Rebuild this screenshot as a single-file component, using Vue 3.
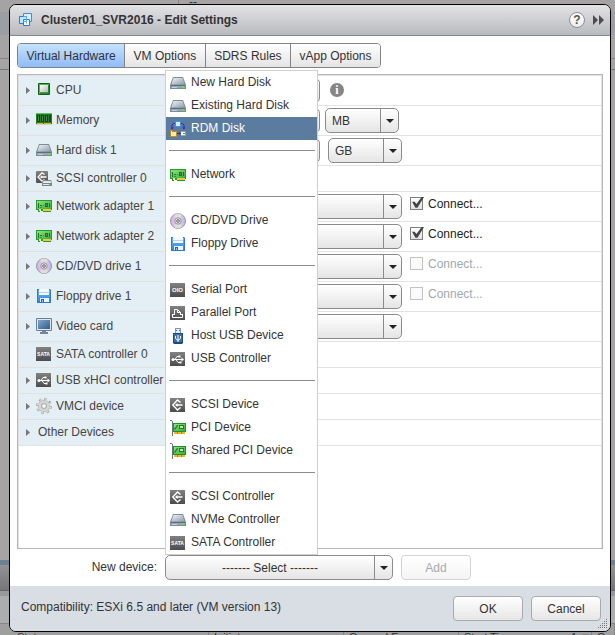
<script setup>
import { ref } from 'vue'

const tabs = ['Virtual Hardware', 'VM Options', 'SDRS Rules', 'vApp Options']
const activeTab = ref('Virtual Hardware')

const devices = [
  { name: 'CPU', icon: 'cpu', control: 'cpu' },
  { name: 'Memory', icon: 'memory', control: 'size', unit: 'MB' },
  { name: 'Hard disk 1', icon: 'disk', control: 'size', unit: 'GB', wide: true },
  { name: 'SCSI controller 0', icon: 'scsidisk', short: true },
  { name: 'Network adapter 1', icon: 'network', control: 'select', connect: true, connected: true },
  { name: 'Network adapter 2', icon: 'network', control: 'select', connect: true, connected: true },
  { name: 'CD/DVD drive 1', icon: 'cd', control: 'select', connect: true, disabled: true },
  { name: 'Floppy drive 1', icon: 'floppy', control: 'select', connect: true, disabled: true },
  { name: 'Video card', icon: 'video', control: 'select' },
  { name: 'SATA controller 0', icon: 'sata', short: true, leaf: true },
  { name: 'USB xHCI controller', icon: 'usb', short: true },
  { name: 'VMCI device', icon: 'gear', short: true },
  { name: 'Other Devices', short: true }
]

const groups = [
  [['New Hard Disk', 'disk'], ['Existing Hard Disk', 'disk'], ['RDM Disk', 'rdm']],
  [['Network', 'network']],
  [['CD/DVD Drive', 'cd'], ['Floppy Drive', 'floppy']],
  [['Serial Port', 'serial'], ['Parallel Port', 'parallel'], ['Host USB Device', 'usbstick'], ['USB Controller', 'usb']],
  [['SCSI Device', 'scsi'], ['PCI Device', 'pci'], ['Shared PCI Device', 'pci']],
  [['SCSI Controller', 'scsi'], ['NVMe Controller', 'disk'], ['SATA Controller', 'sata']]
]
const highlighted = ref('RDM Disk')
</script>

<template>
  <div class="screen">
    <svg class="defs" aria-hidden="true">
      <defs>
        <linearGradient id="g-disk" x1="0" y1="0" x2="1" y2="1">
          <stop offset="0" stop-color="#f0f3f5" /><stop offset="1" stop-color="#8d9bab" />
        </linearGradient>
        <linearGradient id="g-dark" x1="0" y1="0" x2="0" y2="1">
          <stop offset="0" stop-color="#828282" /><stop offset="1" stop-color="#4c4c4c" />
        </linearGradient>
        <linearGradient id="g-green" x1="0" y1="0" x2="1" y2="1">
          <stop offset="0" stop-color="#8ae878" /><stop offset="1" stop-color="#35ad3a" />
        </linearGradient>
        <linearGradient id="g-blue" x1="0" y1="0" x2="0" y2="1">
          <stop offset="0" stop-color="#6bb5fa" /><stop offset="1" stop-color="#2f86e4" />
        </linearGradient>
        <linearGradient id="g-screen" x1="0" y1="0" x2="1" y2="1">
          <stop offset="0" stop-color="#86a7c9" /><stop offset="1" stop-color="#2d5c90" />
        </linearGradient>
        <linearGradient id="g-chip" x1="0" y1="0" x2="1" y2="1">
          <stop offset="0" stop-color="#ffffff" /><stop offset="1" stop-color="#b9b9b9" />
        </linearGradient>
        <linearGradient id="g-cd" x1="0" y1="0" x2="1" y2="0">
          <stop offset="0" stop-color="#b5bdee" /><stop offset=".25" stop-color="#e6bce8" />
          <stop offset=".5" stop-color="#e8e8e8" /><stop offset=".75" stop-color="#dcc0ec" />
          <stop offset="1" stop-color="#a8b8ee" />
        </linearGradient>
      </defs>
      <symbol id="i-cpu" viewBox="0 0 16 16">
        <rect x="2" y="1" width="12" height="12" rx="1" fill="#0f5f15" />
        <path d="M3 2h10v1H3zM3 3h1v9H3z" fill="#4fb94a" />
        <path d="M12 3h1v9H4v-1h8z" fill="#1f8a28" />
        <rect x="4" y="3" width="8" height="8" fill="#5f8a60" />
        <rect x="4" y="3" width="8" height="7" fill="url(#g-chip)" />
      </symbol>
      <symbol id="i-memory" viewBox="0 0 16 16">
        <path d="M0 1h16v11H0z" fill="#1c8226" />
        <path d="M0 1h16v1H0z" fill="#5cc05a" />
        <path d="M1 3h3v7H1zM5 3h3v7H5zM9 3h3v7H9zM13 3h2v7h-2z" fill="#1b431d" />
        <path d="M2 4h1v5H2zM6 4h1v5H6zM10 4h1v5h-1z" fill="#587a59" />
        <path d="M1 11h6v1H1zM8 11h7v1H8z" fill="#f0a732" />
        <path d="M0 12h16v1H0z" fill="#cfd8a6" />
      </symbol>
      <symbol id="i-disk" viewBox="0 0 16 16">
        <path d="M3 2h10l3 8v4H0v-4z" fill="#7d8b9b" />
        <path d="M3.500 3h9l2.200 6.500H1.300z" fill="url(#g-disk)" />
        <path d="M1 10h14v3H1z" fill="#98a5b4" />
        <path d="M1 10h14v1H1z" fill="#5f6f82" />
        <path d="M2 12h5v1H2z" fill="#c6ced6" />
        <path d="M12 11h2v2h-2z" fill="#62e23c" />
      </symbol>
      <symbol id="i-scsi" viewBox="0 0 16 16">
        <rect y="1" width="15" height="14" fill="url(#g-dark)" />
        <path d="M10.500 5.500 7.500 3 2.800 8l4.700 5 3-2.500M6 8h6.500" fill="none" stroke="#fff" stroke-width="1.400" />
        <path d="m5 8 2.500-2v4z" fill="#fff" />
      </symbol>
      <symbol id="i-scsidisk" viewBox="0 0 16 16">
        <rect y="1" width="12" height="12" rx="1" fill="url(#g-dark)" />
        <path d="M8.500 4.500 6 2.800 2 7l4 4.200 2.500-1.700M5 7h5.500" fill="none" stroke="#fff" stroke-width="1.300" />
        <path d="m4 7 2.200-1.800v3.600z" fill="#fff" />
        <path d="M7 10h8l1 3v3H6v-3z" fill="#7a858e" />
        <path d="M7.500 11h7l1 2h-9zM7 14h8v1H7z" fill="#e5e9ec" />
        <path d="M13 14h2v1h-2z" fill="#45d23b" />
      </symbol>
      <symbol id="i-network" viewBox="0 0 16 16">
        <path d="M0 2h16v10h-1v2H7v-1H4v1H2v-2H0z" fill="#279a31" />
        <path d="M1 3h14v8H1z" fill="url(#g-green)" />
        <path d="M2 5h1v5H2zM4 7h2v1H4zM9 5h3v4H9zM13 5h1v4h-1z" fill="#2a6a2e" />
        <path d="M7 7h1v1H7zM4 9h2v1H4z" fill="#3f8b41" />
        <path d="M10 6h1v2h-1z" fill="#777" />
        <path d="M7 11h8v2H7z" fill="#efc63f" />
        <path d="M3 11h2v2H3z" fill="#efe68a" />
      </symbol>
      <symbol id="i-cd" viewBox="0 0 16 16">
        <circle cx="8" cy="8" r="7.500" fill="url(#g-cd)" stroke="#9a9a9a" />
        <path d="M4 2a7 7 0 0 1 8 0L9.500 6h-3zM4 14a7 7 0 0 0 8 0L9.500 10h-3z" fill="#dedede" opacity=".9" />
        <circle cx="8" cy="8" r="3.200" fill="#e6e6e6" stroke="#808080" stroke-width=".8" />
        <circle cx="8" cy="8" r="1.300" fill="#fff" stroke="#5f5f5f" />
      </symbol>
      <symbol id="i-floppy" viewBox="0 0 16 16">
        <path d="M1 1h13l1 1v13H1z" fill="#2a7bd6" />
        <path d="M2 2h12v12H2z" fill="url(#g-blue)" />
        <path d="M3 1h10v6H3z" fill="#f5f8fc" />
        <path d="M3 4h10v1H3z" fill="#c3cfdd" />
        <path d="M4 10h9v4H4z" fill="#edf0f4" />
        <path d="M5 11h3v3H5z" fill="#2a66ac" />
        <path d="M6 12h1v2H6z" fill="#9fc0e6" />
      </symbol>
      <symbol id="i-video" viewBox="0 0 16 16">
        <rect width="16" height="13" rx="1" fill="#6a7f96" />
        <rect x="1" y="1" width="14" height="11" fill="#e0e7ee" />
        <rect x="2" y="2" width="12" height="9" fill="url(#g-screen)" />
        <path d="M6 13h4v1h2v2H4v-2h2z" fill="#6f86a0" />
      </symbol>
      <symbol id="i-sata" viewBox="0 0 16 16">
        <rect y="1" width="15" height="14" fill="url(#g-dark)" />
        <text x="7.500" y="10" text-anchor="middle" font-size="5" font-weight="bold" fill="#fff">SATA</text>
      </symbol>
      <symbol id="i-usb" viewBox="0 0 16 16">
        <rect y="1" width="15" height="14" fill="url(#g-dark)" />
        <path d="M3 8.500h9M5 8.500l2-3h2M6 8.500l2 3h2" fill="none" stroke="#fff" />
        <circle cx="3" cy="8.500" r="1.500" fill="#fff" />
        <path d="m11.500 6.500 2.500 2-2.500 2zM8.500 4.500h2v2h-2zM9.500 10.500h2v2h-2z" fill="#fff" />
      </symbol>
      <symbol id="i-serial" viewBox="0 0 16 16">
        <rect y="1" width="15" height="14" fill="url(#g-dark)" />
        <text x="7.500" y="10" text-anchor="middle" font-size="6" font-weight="bold" fill="#fff">OIO</text>
      </symbol>
      <symbol id="i-parallel" viewBox="0 0 16 16">
        <rect y="1" width="15" height="14" fill="url(#g-dark)" />
        <path d="M4.500 10V4.500h3l3 3V10M7.500 5v2.500h3M2.500 9.500v3h10v-3M2 9.500h3M10 9.500h3" fill="none" stroke="#fff" />
      </symbol>
      <symbol id="i-usbstick" viewBox="0 0 16 16">
        <path d="M5 0h6v5H5z" fill="#7e97b2" />
        <path d="M6 1h4v4H6z" fill="#e4edf5" />
        <path d="M6 2h1v1H6zM9 2h1v1H9z" fill="#506c8c" />
        <path d="M3 5h10v10l-1 1H4l-1-1z" fill="#1c4a7c" />
        <path d="M4 6h8v8H4z" fill="#3d72a9" />
        <path d="M8 7v7M5.500 8v2.500L8 12.500M10.500 8v2.500L8 12.500" fill="none" stroke="#fff" />
      </symbol>
      <symbol id="i-pci" viewBox="0 0 16 16">
        <path d="M0 0h2v1h1v15H2V1H0z" fill="#66748c" />
        <path d="M3 3h13v9H3z" fill="#239030" />
        <path d="M4 4h11v7H4z" fill="url(#g-green)" />
        <path d="M9 5h5v4H9z" fill="#23762d" />
        <path d="M10 6h3v2h-3z" fill="#bfe8b0" />
        <path d="M4 9l3-4h1v1L5 10z" fill="#347c32" />
        <path d="M4 12h11v2H4z" fill="#e8b92e" />
        <path d="M7 12h1v2H7zM11 12h1v2h-1z" fill="#8f8f2c" />
      </symbol>
      <symbol id="i-rdm" viewBox="0 0 16 16">
        <path d="M5 2.500H3.500L2 4v3M11 2.500h1.500L14 4v3M7 12.500h3" fill="none" stroke="#3426c0" />
        <path d="M.5 6.500h3.500L2 8.500zM12 6.500h3.500L14 8.500zM9 11l2 1.500L9 14z" fill="#3426c0" />
        <path d="M6 0h4l1 1v4l-1 1H6L5 5V1z" fill="#3b97ea" />
        <path d="M6 1h4v4H6z" fill="#d4efff" />
        <path d="M0 9h3v1h4v6H0z" fill="#b98d2a" />
        <path d="M1 10h1v1h4v4H1z" fill="#fdebaa" />
        <path d="M11 10h4l1 1v4h-5z" fill="#98a2ae" />
        <path d="M11 11h4v3h-4z" fill="#f6f8fa" />
        <path d="M13 12h2v1h-2z" fill="#27b52d" />
      </symbol>
      <symbol id="i-gear" viewBox="0 0 16 16">
        <circle cx="8" cy="8" r="6.700" fill="none" stroke="#a8a8a8" stroke-width="2.600" stroke-dasharray="2.630 2.630" />
        <circle cx="8" cy="8" r="4.300" fill="none" stroke="#a8a8a8" stroke-width="3.600" />
        <circle cx="8" cy="8" r="6.300" fill="none" stroke="#d8d8d8" stroke-width="2" stroke-dasharray="1.600 3.348" stroke-dashoffset="-.5" />
        <circle cx="8" cy="8" r="4.200" fill="none" stroke="#d6d6d6" stroke-width="2.800" />
        <circle cx="8" cy="8" r="2.400" fill="#f4f8fa" stroke="#999" stroke-width=".8" />
      </symbol>
    </svg>

    <div class="backdrop" aria-hidden="true">
      <div class="bd-top"><span>--</span></div>
      <div class="bd-band"></div>
      <div class="bd-gap"></div>
      <div class="bd-line"></div>
      <div class="bd-fill"></div>
      <div class="bd-bar"></div>
      <div class="bd-tools"></div>
      <div class="bd-head">
        <span>Status</span><span>Initiator</span><span>Queued For</span><span class="sorted">Start Time<i>1 ▼</i></span><span>Co</span>
      </div>
    </div>

    <section class="dialog" role="dialog" aria-labelledby="title">
      <header class="titlebar">
        <svg class="vm" viewBox="0 0 14 14">
          <path d="M4.500 .5h8v8h-8z" fill="#d8efff" stroke="#3390dc" />
          <path d="M.5 3.500h7v7h-7z" fill="#c2e4fc" stroke="#2380d0" />
          <path d="M4.500 6.500h6v6h-6z" fill="#f2faff" stroke="#2380d0" />
          <path d="M4.500 3.500h3v7M4.500 8.500h3" fill="none" stroke="#60aee8" />
        </svg>
        <h1 id="title">Cluster01_SVR2016 - Edit Settings</h1>
        <button class="help">?</button>
        <button class="more" aria-label="More">
          <svg viewBox="0 0 12 10"><path d="M0 0l5 5-5 5zM6 0l5 5-5 5z" fill="#4c4c4c" /></svg>
        </button>
      </header>

      <main class="content">
        <nav class="tabs">
          <button v-for="t in tabs" :key="t" :class="{ active: t === activeTab }" @click="activeTab = t">{{ t }}</button>
        </nav>

        <div class="panel">
          <div v-for="(d, i) in devices" :key="d.name" class="row" :class="{ short: d.short }">
            <button class="name">
              <svg class="tri" viewBox="0 0 4 7"><path v-if="!d.leaf" d="M0 0l4 3.500L0 7z" fill="#767676" /></svg>
              <svg v-if="d.icon" class="icon"><use :href="'#i-' + d.icon" /></svg>
              <span :class="{ bare: !d.icon }">{{ d.name }}</span>
            </button>
            <div class="value">
              <template v-if="d.control === 'cpu'">
                <span class="drop field"><select :aria-label="d.name"><option></option></select></span>
                <svg class="info" viewBox="0 0 14 14">
                  <circle cx="7" cy="7" r="7" fill="#858585" />
                  <text x="7" y="11" text-anchor="middle" font-family="Liberation Serif, serif" font-size="12" font-weight="bold" fill="#fff">i</text>
                </svg>
              </template>
              <template v-if="d.control === 'size'">
                <span class="drop field"><select :aria-label="d.name"><option></option></select></span>
                <span class="drop unit" :class="{ wide: d.wide }"><select :aria-label="d.name + ' unit'"><option>{{ d.unit }}</option></select></span>
              </template>
              <span v-if="d.control === 'select'" class="drop full"><select :aria-label="d.name"><option></option></select></span>
              <label v-if="d.connect" class="connect" :class="{ off: d.disabled }" :for="'c' + i">
                <input :id="'c' + i" type="checkbox" :checked="d.connected" :disabled="d.disabled">
                <span>Connect...</span>
              </label>
            </div>
          </div>
        </div>

        <div class="newdev">
          <label for="device">New device:</label>
          <div class="picker">
            <span class="drop"><select id="device"><option>------- Select -------</option></select></span>
            <div class="menu">
              <ul v-for="(g, n) in groups" :key="n">
                <li v-for="[text, icon] in g" :key="text">
                  <button :class="{ on: text === highlighted }" @mouseenter="highlighted = text">
                    <svg class="icon"><use :href="'#i-' + icon" /></svg><span>{{ text }}</span>
                  </button>
                </li>
              </ul>
            </div>
          </div>
          <button class="btn" disabled>Add</button>
        </div>
      </main>

      <footer class="footer">
        <p>Compatibility: ESXi 6.5 and later (VM version 13)</p>
        <button class="btn">OK</button>
        <button class="btn">Cancel</button>
        <svg class="grip" viewBox="0 0 10 10">
          <path d="M8 0h1v1H8zM6 2h1v1H6zM8 2h1v1H8zM4 4h1v1H4zM6 4h1v1H6zM8 4h1v1H8zM2 6h1v1H2zM4 6h1v1H4zM6 6h1v1H6zM8 6h1v1H8zM0 8h1v1H0zM2 8h1v1H2zM4 8h1v1H4zM6 8h1v1H6zM8 8h1v1H8z" fill="#777" />
        </svg>
      </footer>
    </section>
  </div>
</template>

<style>
body { margin: 0; }
</style>

<style scoped>
* { box-sizing: border-box; }
.screen {
  position: relative;
  display: flex;
  min-height: 100vh;
  padding: 4px 4px 3px 9px;
  font: 12px/16px "Liberation Sans", Arial, sans-serif;
  color: #333;
}
button, select, input { font: inherit; color: inherit; margin: 0; }
button { border: 0; background: none; padding: 0; }
h1, p, ul { margin: 0; padding: 0; }
.defs { position: absolute; width: 0; height: 0; }
.icon { width: 16px; height: 16px; flex: none; }

.backdrop {
  position: absolute;
  inset: 0;
  display: flex;
  flex-direction: column;
  overflow: hidden;
  background: #a5a3a3;
}
.bd-top { height: 12px; padding-left: 178px; line-height: 4px; }
.bd-top span { display: block; border-left: 1px solid #858585; padding-left: 10px; height: 12px; }
.bd-band { height: 23px; background: #9b9ea5; }
.bd-gap { height: 24px; border-bottom: 1px solid #858383; }
.bd-line { height: 11px; border-bottom: 1px solid #737983; }
.bd-fill { flex: 1; }
.bd-bar { height: 31px; border-top: 5px solid #6c8292; border-bottom: 1px solid #666; background: linear-gradient(#929296, #77777b); }
.bd-tools { height: 32px; border-top: 5px solid #9a9a9e; background: #adadad; }
.bd-head {
  display: grid;
  grid-template-columns: 200px 135px 115px 133px 1fr;
  height: 12px;
  padding-left: 9px;
  border-top: 1px solid #858585;
  background: #9f9f9f;
  font-size: 11px;
  line-height: 26px;
}
.bd-head span { padding-left: 5px; border-right: 1px solid #858585; }
.bd-head span:first-child { padding-left: 8px; }
.bd-head .sorted { display: flex; justify-content: space-between; }
.bd-head i { font-style: normal; }

.dialog {
  position: relative;
  flex: 1;
  display: flex;
  flex-direction: column;
  min-width: 0;
  border: 1px solid #000;
  border-radius: 7px;
  background: #fff;
}
.titlebar {
  display: flex;
  align-items: center;
  height: 31px;
  padding: 0 5px 0 9px;
  border-bottom: 1px solid #858587;
  border-radius: 6px 6px 0 0;
  background: linear-gradient(#e3e3e6, #b9babe);
}
.vm { width: 14px; height: 14px; }
h1 { flex: 1; padding-left: 8px; font-size: 12px; font-weight: bold; }
.help {
  width: 16px;
  height: 16px;
  border: 1px solid #8f8f8f;
  border-radius: 8px;
  background: linear-gradient(#fff, #ececec);
  font-weight: bold;
  line-height: 14px;
  color: #555;
}
.more { display: flex; padding-left: 8px; }
.more svg { width: 12px; height: 10px; }

.content { flex: 1; display: flex; flex-direction: column; padding: 7px 7px 6px; }
.tabs { display: flex; align-self: flex-start; width: 364px; border: 1px solid #838383; border-radius: 4px; overflow: hidden; }
.tabs button { flex: 1 0 auto; height: 23px; padding: 0 8px; border-left: 1px solid #838383; background: linear-gradient(#fff, #e4e4e4); }
.tabs button:first-child { border-left: 0; }
.tabs button.active { background: linear-gradient(#c6e2ff, #8ebbfb); }

.panel { flex: 1; margin-top: 6px; border: 1px solid #b5b8ba; box-shadow: inset 1px 1px #e0e0e0, inset -1px 0 #e0e0e0; padding: 1px; }
.row { display: grid; grid-template-columns: 148px 1fr; height: 30px; border-bottom: 1px solid #e2e2e2; }
.row.short { height: 26px; }
.name {
  display: flex;
  align-items: center;
  padding: 0 0 1px 7px;
  background: #e4eff5;
  white-space: nowrap;
  color: #444;
}
.tri { width: 4px; height: 7px; margin-right: 6px; }
.name span { margin-left: 4px; }
.name .bare { margin-left: 2px; }
.value { display: flex; align-items: flex-start; padding: 2px 0 0 3px; }

.drop { position: relative; display: block; height: 25px; }
.drop select {
  display: block;
  width: 100%;
  height: 25px;
  padding: 0 20px 0 6px;
  appearance: none;
  border: 1px solid #8b8b8b;
  border-radius: 5px;
  background: linear-gradient(#fff, #e5e5e5);
}
.drop::before { content: ""; position: absolute; top: 1px; bottom: 1px; right: 18px; border-left: 1px solid #8b8b8b; }
.drop::after { content: ""; position: absolute; top: 11px; right: 5px; border: 4px solid transparent; border-top-color: #222; border-bottom: 0; }
.field { width: 150px; }
.unit { width: 74px; margin-left: 5px; }
.unit.wide { margin-left: 8px; }
.full { width: 232px; }
.info { width: 14px; height: 14px; margin: 5px 0 0 10px; }
.connect { display: flex; gap: 5px; padding: 2px 0 0 8px; color: #222; }
.connect.off { color: #9fa9ab; }
.connect input {
  position: relative;
  width: 13px;
  height: 13px;
  margin-top: 1px;
  appearance: none;
  border: 1px solid #808080;
  background: linear-gradient(#fff, #e0e0e0);
}
.connect.off input { border-color: #c2c2c2; background: #fafafa; }
.connect input:checked::after {
  content: "";
  position: absolute;
  inset: -1px -2px 0 0;
  background: #444;
  clip-path: polygon(8% 40%, 28% 40%, 42% 58%, 82% 0, 100% 0, 50% 90%, 34% 90%);
}

.newdev { display: flex; margin-top: 6px; }
.newdev label { width: 148px; padding: 4px 8px 0 0; text-align: right; }
.picker { position: relative; width: 228px; margin-right: 8px; }
.picker select { text-align-last: center; padding: 0 18px 0 0; }
.menu {
  position: absolute;
  bottom: 100%;
  left: 0;
  width: 153px;
  border: 1px solid #cfcfcf;
  background: #fff;
}
.menu ul { list-style: none; }
.menu ul + ul::before { content: ""; display: block; height: 1px; margin: 10px 2px 12px 3px; background: #8c8c8c; }
.menu button { display: flex; gap: 5px; width: 100%; height: 23px; padding: 3px 4px; align-items: flex-start; white-space: nowrap; }
.menu .icon { margin-top: 1px; }
.menu button.on { background: #5b7b9f; color: #fff; }

.btn { width: 70px; height: 25px; border: 1px solid #a7abae; border-radius: 4px; background: linear-gradient(#fff, #e6e6e6); }
.btn:disabled { border-color: #d5d5d5; background: linear-gradient(#fff, #f4f4f4); color: #a3acae; }
.footer {
  position: relative;
  display: flex;
  gap: 8px;
  height: 45px;
  padding: 10px 9px 0 11px;
  border-radius: 0 0 6px 6px;
  background: #d9dde4;
}
.footer p { flex: 1; padding-top: 3px; }
.grip { position: absolute; right: 2px; bottom: 2px; width: 10px; height: 10px; }
</style>
